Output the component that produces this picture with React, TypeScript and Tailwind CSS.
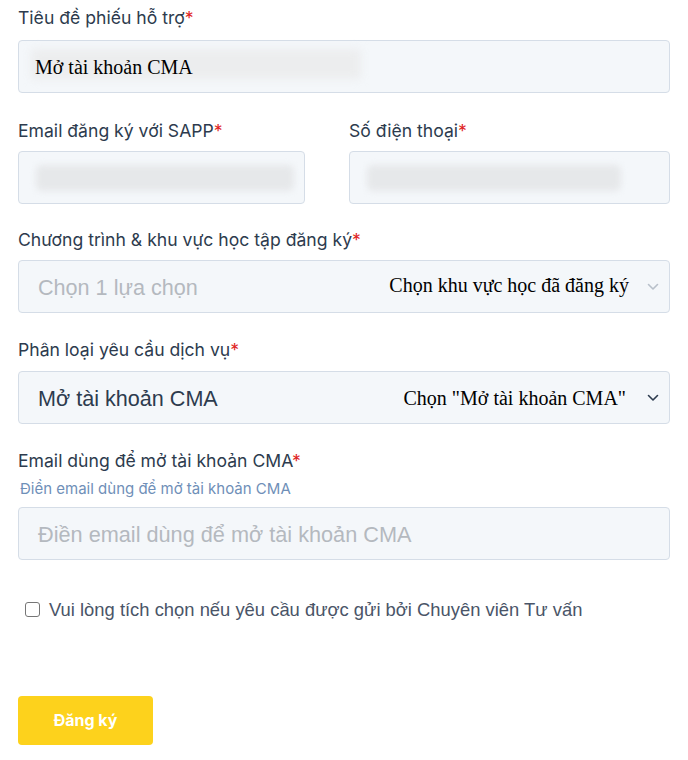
import React from "react";

const Star = () => <span className="text-[#e02424]">*</span>;

function Label({ children }: { children: React.ReactNode }) {
  return (
    <div className="h-[20px] text-[17.6px] leading-[20px] text-[#2d3b4e] font-['Inter',sans-serif] whitespace-nowrap">
      {children}
      <Star />
    </div>
  );
}

function Blur({ w }: { w: string }) {
  return <div className={`h-[26px] ${w} rounded-md bg-[#e6e8ea] blur-[3px]`} />;
}

const box =
  "h-[53px] rounded-[4px] border border-[#d5dde7] bg-[#f4f7fa] flex items-center";

function Chevron({ color }: { color: string }) {
  return (
    <svg width="12" height="8" viewBox="0 0 12 8" className="shrink-0">
      <path d="M1.5 1.5 L6 6 L10.5 1.5" fill="none" stroke={color} strokeWidth="1.6" strokeLinecap="round" strokeLinejoin="round" />
    </svg>
  );
}

export default function App() {
  return (
    <div className="w-[688px] h-[760px] bg-white px-[18px] pt-[8px] font-['Liberation_Sans',sans-serif]">
      <Label>Tiêu đề phiếu hỗ trợ</Label>
      <div className={`${box} mt-[12px] pl-[16px]`}>
        <div className="relative flex items-center">
          <div className="absolute left-[-4px] top-[-3px] h-[30px] w-[330px] bg-[#ecedee] blur-[4px] rounded" />
          <span className="relative font-['Liberation_Serif',serif] text-[20px] text-black">Mở tài khoản CMA</span>
        </div>
      </div>

      <div className="mt-[28px] flex gap-[44px]">
        <div className="w-[287px]">
          <Label>Email đăng ký với SAPP</Label>
          <div className={`${box} mt-[10px] pl-[17px]`}>
            <Blur w="w-[258px]" />
          </div>
        </div>
        <div className="flex-1">
          <Label>Số điện thoại</Label>
          <div className={`${box} mt-[10px] pl-[17px]`}>
            <Blur w="w-[254px]" />
          </div>
        </div>
      </div>

      <div className="mt-[26px]">
        <Label>Chương trình &amp; khu vực học tập đăng ký</Label>
        <div className={`${box} mt-[10px] pl-[19px] pr-[10px]`}>
          <span className="text-[21.6px] text-[#b4b9bf] translate-y-[2px]">Chọn 1 lựa chọn</span>
          <span className="ml-auto font-['Liberation_Serif',serif] text-[20px] text-black -translate-y-[2px]">Chọn khu vực học đã đăng ký</span>
          <span className="ml-[18px]"><Chevron color="#b8c0ca" /></span>
        </div>
      </div>

      <div className="mt-[27px]">
        <Label>Phân loại yêu cầu dịch vụ</Label>
        <div className={`${box} mt-[11px] pl-[19px] pr-[10px]`}>
          <span className="text-[21.6px] text-[#2d3b4e] translate-y-[2px]">Mở tài khoản CMA</span>
          <span className="ml-auto font-['Liberation_Serif',serif] text-[20px] text-black">Chọn "Mở tài khoản CMA"</span>
          <span className="ml-[21px]"><Chevron color="#2d3b4e" /></span>
        </div>
      </div>

      <div className="mt-[27px]">
        <Label>Email dùng để mở tài khoản CMA</Label>
        <div className="mt-[9px] text-[15px] leading-[18px] text-[#6f8fb8] font-['Inter',sans-serif] pl-[2px]">
          Điền email dùng để mở tài khoản CMA
        </div>
        <div className={`${box} mt-[9px] pl-[19px]`}>
          <span className="text-[21.7px] text-[#b4b9bf] translate-y-[2px]">Điền email dùng để mở tài khoản CMA</span>
        </div>
      </div>

      <div className="mt-[36px] flex items-center pl-[7px]">
        <div className="w-[15px] h-[15px] rounded-[3px] border-[1.5px] border-[#767676] bg-white" />
        <span className="ml-[9px] text-[18.4px] text-[#4a5568]">
          Vui lòng tích chọn nếu yêu cầu được gửi bởi Chuyên viên Tư vấn
        </span>
      </div>

      <button className="mt-[72px] w-[135px] h-[49px] rounded-[4px] bg-[#fdd21c] text-white text-[16px] font-bold font-['Inter',sans-serif]">
        Đăng ký
      </button>
    </div>
  );
}
